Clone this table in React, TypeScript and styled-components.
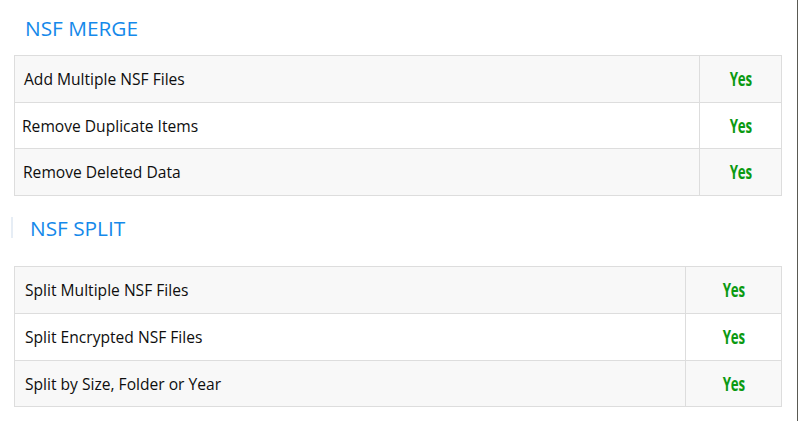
import React from "react";
import styled, { createGlobalStyle } from "styled-components";

const Global = createGlobalStyle`
  html, body { margin: 0; padding: 0; background: #fff; }
  body { font-family: "Open Sans", "Noto Sans", sans-serif; }
`;

const Page = styled.div`
  width: 797px;
  height: 421px;
  border-right: 1px solid #5a5a54;
  box-sizing: content-box;
  overflow: hidden;
`;

const Section = styled.section<{ $top: number; $headLeft: number; $tableGap: number }>`
  padding-top: ${(p) => p.$top}px;
  padding-left: 14px;
  width: 768px;
  h2 { margin-left: ${(p) => p.$headLeft}px; }
  table { margin-top: ${(p) => p.$tableGap}px; }
`;

const HeadingWrap = styled.div`
  position: relative;
`;

const Heading = styled.h2`
  margin: 0;
  font-family: "Open Sans", "Noto Sans", sans-serif;
  font-weight: 400;
  font-size: 20.8px;
  line-height: 26px;
  color: #1589ea;
`;

const Marker = styled.span`
  position: absolute;
  left: -3px;
  top: 2px;
  width: 2px;
  height: 21px;
  background: #e6edf5;
`;

const Table = styled.table<{ $valueWidth: number }>`
  width: 768px;
  border-collapse: collapse;
  table-layout: fixed;
  col.value { width: ${(p) => p.$valueWidth}px; }
`;

const Row = styled.tr<{ $shaded: boolean; $h: number }>`
  background: ${(p) => (p.$shaded ? "#f8f8f8" : "#ffffff")};
  height: ${(p) => p.$h}px;
`;

const Label = styled.td<{ $indent: number }>`
  border: 1px solid #dddddd;
  padding: 0 0 0 ${(p) => p.$indent}px;
  font-family: "Open Sans", "Noto Sans", sans-serif;
  font-size: 15.6px;
  color: #0e0e0e;
  vertical-align: middle;
`;

const Value = styled.td`
  border: 1px solid #dddddd;
  padding: 0;
  text-align: center;
  vertical-align: middle;
`;

const Yes = styled.span`
  display: inline-block;
  font-family: "Open Sans", "Noto Sans", sans-serif;
  font-weight: 700;
  font-size: 19px;
  line-height: 20px;
  color: #0b9a12;
  transform: scaleX(0.7);
  letter-spacing: -0.3px;
  margin-top: 2px;
`;

type Item = { label: string; indent: number; h: number };

const merge: Item[] = [
  { label: "Add Multiple NSF Files", indent: 9, h: 47 },
  { label: "Remove Duplicate Items", indent: 7, h: 46 },
  { label: "Remove Deleted Data", indent: 8, h: 47 },
];

const split: Item[] = [
  { label: "Split Multiple NSF Files", indent: 10, h: 47 },
  { label: "Split Encrypted NSF Files", indent: 10, h: 47 },
  { label: "Split by Size, Folder or Year", indent: 10, h: 46 },
];

function FeatureTable({ items, valueWidth }: { items: Item[]; valueWidth: number }) {
  return (
    <Table $valueWidth={valueWidth}>
      <colgroup>
        <col />
        <col className="value" />
      </colgroup>
      <tbody>
        {items.map((it, i) => (
          <Row key={it.label} $shaded={i % 2 === 0} $h={it.h}>
            <Label $indent={it.indent}>{it.label}</Label>
            <Value>
              <Yes>Yes</Yes>
            </Value>
          </Row>
        ))}
      </tbody>
    </Table>
  );
}

export default function App() {
  return (
    <Page>
      <Global />
      <Section $top={15} $headLeft={11} $tableGap={14}>
        <Heading>NSF MERGE</Heading>
        <FeatureTable items={merge} valueWidth={82} />
      </Section>
      <Section $top={19} $headLeft={16} $tableGap={25}>
        <HeadingWrap>
          <Marker />
          <Heading>NSF SPLIT</Heading>
        </HeadingWrap>
        <FeatureTable items={split} valueWidth={96} />
      </Section>
    </Page>
  );
}
